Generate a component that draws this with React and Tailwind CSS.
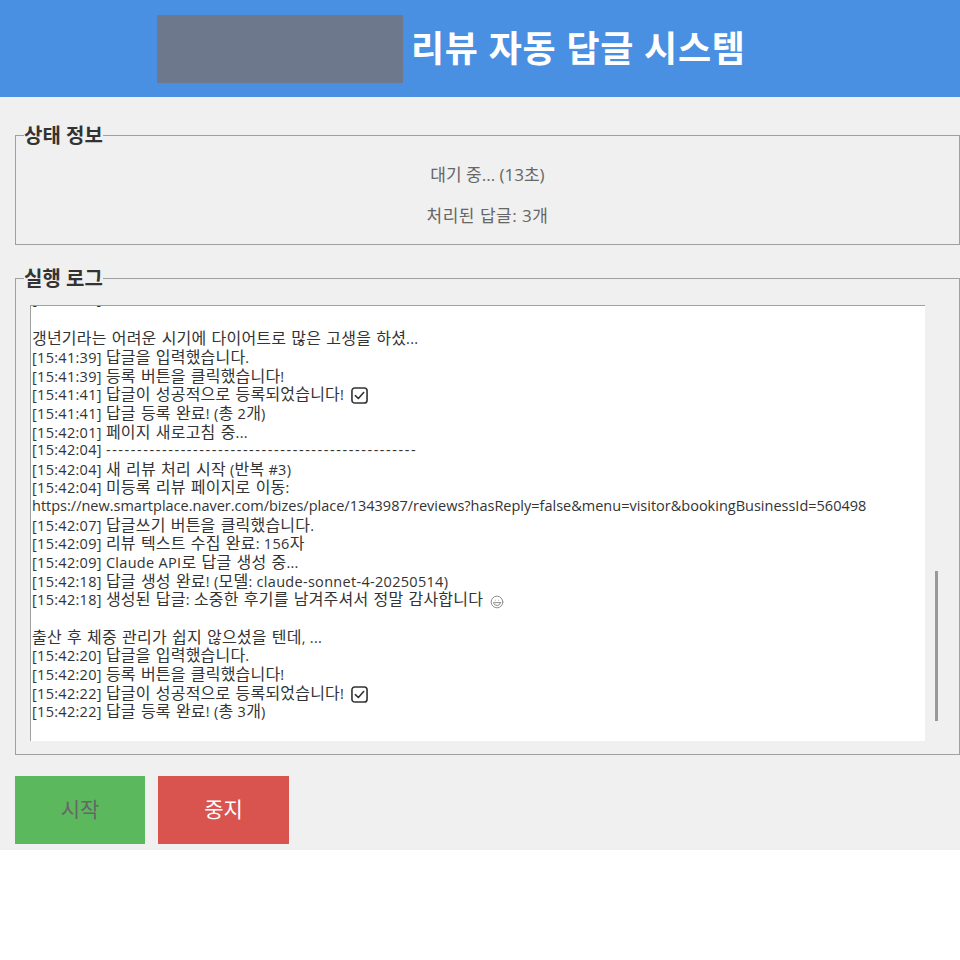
import React from 'react';
import { Laugh } from 'lucide-react';

const KR = "font-['Segoe_UI','Open_Sans','Noto_Sans_CJK_KR',sans-serif]";

const Check = () => (
  <svg width="17" height="17" viewBox="0 0 18 18" fill="none" stroke="#333" strokeWidth="1.7" strokeLinecap="round" strokeLinejoin="round" className="inline-block align-[-4px] ml-[7px]">
    <rect x="1" y="1" width="16" height="16" rx="3" />
    <path d="M4.6 9.2 L7.8 12.2 L13.4 5.8" />
  </svg>
);

const Smile = () => (
  <Laugh size={14} strokeWidth={1.6} className="inline-block align-[-4px] ml-[7px] text-[#888]" />
);

// hangul runs need a bigger size than the latin part of the line
const Mixed = ({ text }) =>
  text.split(/([가-힣]+(?: [가-힣]+)*)/).map((part, i) =>
    i % 2
      ? <span key={i} className="inline-block text-[16px] tracking-[0.2px] [word-spacing:0.8px]">{part}</span>
      : part && <span key={i} className="inline-block whitespace-pre tracking-[0.3px]">{part}</span>
  );

const lines = [
  { text: '[15:41:37] 생성된 답글: 소중한 후기를 남겨주셔서 정말 감사합니다' },
  { text: '' },
  { text: '갱년기라는 어려운 시기에 다이어트로 많은 고생을 하셨...' },
  { text: '[15:41:39] 답글을 입력했습니다.' },
  { text: '[15:41:39] 등록 버튼을 클릭했습니다!' },
  { text: '[15:41:41] 답글이 성공적으로 등록되었습니다!', icon: <Check /> },
  { text: '[15:41:41] 답글 등록 완료! (총 2개)' },
  { text: '[15:42:01] 페이지 새로고침 중...' },
  { text: '[15:42:04] ', dashes: '-'.repeat(50) },
  { text: '[15:42:04] 새 리뷰 처리 시작 (반복 #3)' },
  { text: '[15:42:04] 미등록 리뷰 페이지로 이동:' },
  { url: 'https://new.smartplace.naver.com/bizes/place/1343987/reviews?hasReply=false&menu=visitor&bookingBusinessId=560498' },
  { text: '[15:42:07] 답글쓰기 버튼을 클릭했습니다.' },
  { text: '[15:42:09] 리뷰 텍스트 수집 완료: 156자' },
  { text: '[15:42:09] Claude API로 답글 생성 중...' },
  { text: '[15:42:18] 답글 생성 완료! (모델: claude-sonnet-4-20250514)' },
  { text: '[15:42:18] 생성된 답글: 소중한 후기를 남겨주셔서 정말 감사합니다', icon: <Smile /> },
  { text: '' },
  { text: '출산 후 체중 관리가 쉽지 않으셨을 텐데, ...' },
  { text: '[15:42:20] 답글을 입력했습니다.' },
  { text: '[15:42:20] 등록 버튼을 클릭했습니다!' },
  { text: '[15:42:22] 답글이 성공적으로 등록되었습니다!', icon: <Check /> },
  { text: '[15:42:22] 답글 등록 완료! (총 3개)' },
];

const Group = ({ title, className, children }) => (
  <fieldset className={`border border-[#a0a0a0] ml-[15px] min-w-0 ${className}`}>
    <legend className="ml-[8px] text-[20px] leading-[25px] font-bold text-[#333]">{title}</legend>
    {children}
  </fieldset>
);

export default function App() {
  return (
    <div className={`${KR} bg-white min-h-[960px]`}>
      <header className="bg-[#4a90e2] h-[97px] flex items-center pl-[157px] gap-[8px]">
        <div className="w-[246px] h-[68px] bg-[#6e788c]"></div>
        <h1 className="text-[36px] font-bold text-white tracking-[0.7px]">리뷰 자동 답글 시스템</h1>
      </header>

      <main className="bg-[#f0f0f0] h-[753px] pt-[26px]">
        <Group title="상태 정보" className="h-[122px]">
          <div className="flex flex-col items-center text-[17px] text-[#666] leading-[20px] pt-[17px] gap-[21px]">
            <p>대기 중... (13초)</p>
            <p className="tracking-[0.5px]">처리된 답글: 3개</p>
          </div>
        </Group>

        <Group title="실행 로그" className="h-[489px] mt-[21px]">
          <div className="flex h-[436px] mt-[14px] pl-[14px]">
            <div className="w-[895px] bg-white border-l border-t border-[#a0a0a0] overflow-hidden flex flex-col justify-end pb-[20px] text-[14.5px] leading-[18.67px] text-[#333] pl-[1px]">
              {lines.map((line, i) => (
                <div key={i} className={`h-[18.67px] whitespace-nowrap shrink-0 ${i === 0 ? 'leading-[13px]' : ''}`}>
                  {line.url}
                  {line.text && <Mixed text={line.text} />}
                  {line.dashes && <span className="tracking-[1.56px]">{line.dashes}</span>}
                  {line.icon}
                </div>
              ))}
            </div>
            <div className="w-[15px] relative">
              <div className="absolute left-[10px] top-[266px] w-[3px] h-[150px] bg-[#999]"></div>
            </div>
          </div>
        </Group>

        <div className="flex gap-[13px] ml-[15px] mt-[21px]">
          <button className="w-[130px] h-[68px] bg-[#5cb85c] text-[#666] text-[21px]">시작</button>
          <button className="w-[131px] h-[68px] bg-[#d9534f] text-white text-[21px]">중지</button>
        </div>
      </main>
    </div>
  );
}
